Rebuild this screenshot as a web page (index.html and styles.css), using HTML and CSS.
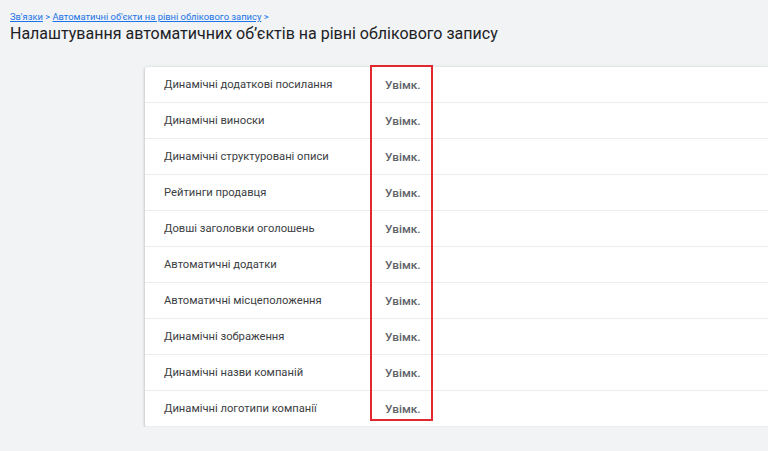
FILE: index.html
```html
<!DOCTYPE html>
<html lang="uk">
<head>
    <meta charset="UTF-8">
    <meta name="viewport" content="width=device-width, initial-scale=1.0">
    <title>Налаштування автоматичних об’єктів</title>
    <link rel="stylesheet" href="styles.css">
</head>
<body>

<div class="page-header">
    <div class="breadcrumbs">
        <a href="#">Зв'язки</a> <span class="sep">&gt;</span>
        <a href="#">Автоматичні об'єкти на рівні облікового запису</a> <span class="sep">&gt;</span>
    </div>
    <h1>Налаштування автоматичних об’єктів на рівні облікового запису</h1>
</div>

<div class="settings-card">
    <div class="row"><div class="label">Динамічні додаткові посилання</div><div class="value">Увімк.</div></div>
    <div class="row"><div class="label">Динамічні виноски</div><div class="value">Увімк.</div></div>
    <div class="row"><div class="label">Динамічні структуровані описи</div><div class="value">Увімк.</div></div>
    <div class="row"><div class="label">Рейтинги продавця</div><div class="value">Увімк.</div></div>
    <div class="row"><div class="label">Довші заголовки оголошень</div><div class="value">Увімк.</div></div>
    <div class="row"><div class="label">Автоматичні додатки</div><div class="value">Увімк.</div></div>
    <div class="row"><div class="label">Автоматичні місцеположення</div><div class="value">Увімк.</div></div>
    <div class="row"><div class="label">Динамічні зображення</div><div class="value">Увімк.</div></div>
    <div class="row"><div class="label">Динамічні назви компаній</div><div class="value">Увімк.</div></div>
    <div class="row"><div class="label">Динамічні логотипи компанії</div><div class="value">Увімк.</div></div>

    <!-- highlight around the status column -->
    <div class="highlight"></div>
</div>

</body>
</html>
```

FILE: styles.css
```css
body {
    margin: 0;
    background-color: #f1f3f4;
    font-family: Roboto, "Noto Sans", Arial, sans-serif;
    color: #3c4043;
    overflow: hidden;
}

.page-header {
    padding: 10px 10px 0;
}

.breadcrumbs {
    font-size: 9.4px;
    line-height: 13px;
    color: #1a73e8;
}

.breadcrumbs a {
    color: #1a73e8;
    text-decoration: underline;
}

.breadcrumbs .sep {
    text-decoration: none;
}

h1 {
    margin: 1px 0 0;
    font-size: 16px;
    font-weight: 400;
    line-height: 20px;
    color: #202124;
}

.settings-card {
    position: relative;
    margin: 23px 0 0 145px;
    background: #fff;
    border-radius: 3px 0 0 3px;
    box-shadow: 0 1px 2px rgba(60, 64, 67, 0.3), 0 1px 3px 1px rgba(60, 64, 67, 0.12);
}

.row {
    display: flex;
    align-items: center;
    height: 35px;
    border-bottom: 1px solid #ececec;
    font-size: 11.2px;
}

.row:last-of-type {
    border-bottom: none;
}

.label {
    width: 221px;
    padding-left: 19px;
}

.value {
    color: #5f6368;
    font-weight: 500;
    font-size: 11.8px;
}

.highlight {
    position: absolute;
    left: 225px;
    top: -2px;
    width: 59px;
    height: 352px;
    border: 2px solid #e0282e;
}
```
